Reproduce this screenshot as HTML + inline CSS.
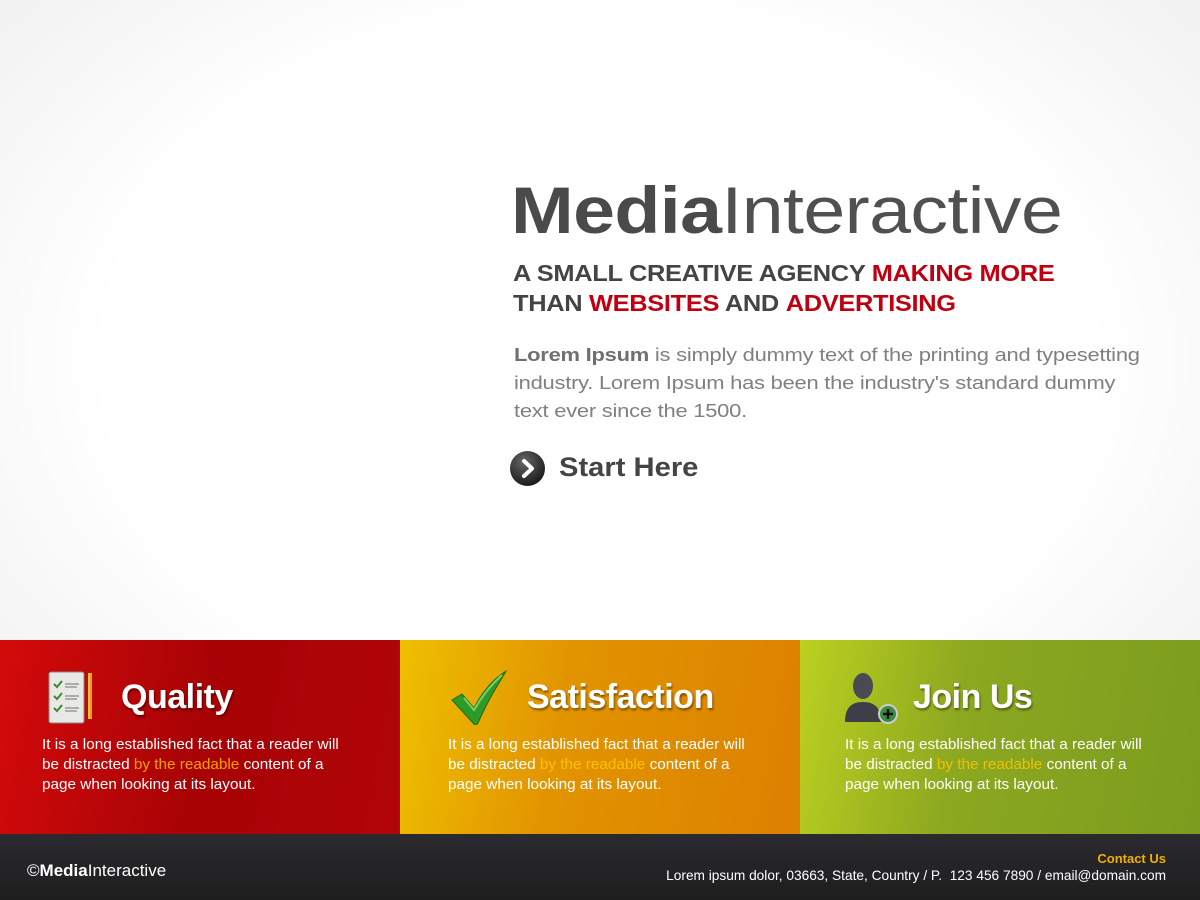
<!DOCTYPE html>
<html><head><meta charset="utf-8"><style>
*{margin:0;padding:0;box-sizing:border-box}
body{width:1200px;height:900px;overflow:hidden;font-family:"Liberation Sans",sans-serif;background:radial-gradient(ellipse 75% 70% at 50% 40%,#fff 55%,#ececec 100%);position:relative}
.abs{position:absolute;white-space:nowrap;transform-origin:0 0}
.logo{left:511px;top:170px;font-size:66px;color:#505050;letter-spacing:-0.5px;line-height:80px;transform:scaleX(1.14)}
.logo b{font-weight:bold;color:#4a4a4a}
.tag{left:513px;top:258px;font-size:23px;font-weight:bold;color:#444;line-height:30px;letter-spacing:-0.3px;transform:scaleX(1.105)}
.tag b{color:#c00010}
.p{left:514px;top:341px;font-size:18.5px;color:#808080;line-height:28px;letter-spacing:-0.2px;transform:scaleX(1.185)}
.p b{color:#707070}
.start{left:559px;top:452px;font-size:27px;font-weight:bold;color:#444;transform:scaleX(1.08)}
.panel{position:absolute;top:640px;height:194px;width:400px}
.p1{left:0;background:linear-gradient(100deg,#d40a0a 0%,#a80306 50%,#b00408 100%)}
.p2{left:400px;background:linear-gradient(100deg,#eec000 0%,#e29400 40%,#dc8000 100%)}
.p3{left:800px;background:linear-gradient(100deg,#bcd020 0%,#8ca820 40%,#7b9c1e 100%)}
.title{position:absolute;top:38px;font-size:34px;font-weight:bold;color:#fff;text-shadow:1px 2px 2px rgba(0,0,0,.45);letter-spacing:-0.5px;transform:scaleX(1.0);transform-origin:0 0;white-space:nowrap}
.txt{position:absolute;top:95px;font-size:14.3px;line-height:20px;color:#fff;white-space:nowrap;transform:scaleX(1.07);transform-origin:0 0}
.txt span{color:#f5a000}
.p2 .txt span{color:#ffc000}
.p3 .txt span{color:#f0c000}
.foot{position:absolute;left:0;top:834px;width:1200px;height:66px;background:linear-gradient(#2a2a30,#1e1e1e)}
</style></head><body>
<div class="abs logo"><b>Media</b>Interactive</div>
<div class="abs tag">A SMALL CREATIVE AGENCY <b>MAKING MORE</b><br>THAN <b>WEBSITES</b> AND <b>ADVERTISING</b></div>
<div class="abs p"><b>Lorem Ipsum</b> is simply dummy text of the printing and typesetting<br>industry. Lorem Ipsum has been the industry's standard dummy<br>text ever since the 1500.</div>
<svg class="abs" style="left:509px;top:450px" width="37" height="37" viewBox="0 0 37 37"><defs><radialGradient id="g" cx=".4" cy=".3" r=".8"><stop offset="0" stop-color="#666"/><stop offset="1" stop-color="#111"/></radialGradient></defs><circle cx="18.5" cy="18.5" r="17.5" fill="url(#g)"/><path d="M15 11l8 7.5-8 7.5" stroke="#fff" stroke-width="4" fill="none" stroke-linecap="round" stroke-linejoin="round"/></svg>
<div class="abs start">Start Here</div>

<div class="panel p1">
<svg style="position:absolute;left:48px;top:30px" width="48" height="56" viewBox="0 0 48 56"><rect x="1" y="2" width="35" height="51" rx="2" fill="#e8e8e4" stroke="#888"/><g stroke="#3a8a30" stroke-width="2" fill="none"><path d="M6 14l3 3 5-6M6 26l3 3 5-6M6 38l3 3 5-6"/></g><g stroke="#999" stroke-width="1.5"><path d="M17 14h14M17 17h12M17 26h14M17 29h12M17 38h14M17 41h12"/></g><rect x="40" y="3" width="4" height="46" fill="#e8a020"/><rect x="40" y="3" width="2" height="46" fill="#f6c040"/></svg>
<div class="title" style="left:121px">Quality</div>
<div class="txt" style="left:42px">It is a long established fact that a reader will<br>be distracted <span>by the readable</span> content of a<br>page when looking at its layout.</div>
</div>
<div class="panel p2">
<svg style="position:absolute;left:50px;top:30px" width="60" height="56" viewBox="0 0 60 56"><path d="M2 30l10-6 12 14C32 22 42 10 56 1c-4 8-16 24-28 52-1 2-4 2-5 0z" fill="#2e9a28" stroke="#1a6a18"/><path d="M14 28l10 12C32 26 42 14 52 5" stroke="#7cd060" stroke-width="2" fill="none"/></svg>
<div class="title" style="left:127px">Satisfaction</div>
<div class="txt" style="left:48px">It is a long established fact that a reader will<br>be distracted <span>by the readable</span> content of a<br>page when looking at its layout.</div>
</div>
<div class="panel p3">
<svg style="position:absolute;left:45px;top:32px" width="56" height="54" viewBox="0 0 56 54"><ellipse cx="18" cy="14" rx="10" ry="13" fill="#4a4a55"/><path d="M0 50c0-14 6-20 18-20s18 6 18 20z" fill="#3e3e48"/><circle cx="43" cy="42" r="9" fill="#3a8a40" stroke="#ccc" stroke-width="2"/><path d="M43 37v10M38 42h10" stroke="#111" stroke-width="2.5"/></svg>
<div class="title" style="left:113px">Join Us</div>
<div class="txt" style="left:45px">It is a long established fact that a reader will<br>be distracted <span>by the readable</span> content of a<br>page when looking at its layout.</div>
</div>
<div class="foot">
<div class="abs" style="left:27px;top:27px;font-size:17px;color:#fff">©<b>Media</b>Interactive</div>
<div class="abs" style="right:34px;top:17px;font-size:13px;font-weight:bold;color:#f0b000">Contact Us</div>
<div class="abs" style="right:34px;top:34px;font-size:13.7px;color:#fff">Lorem ipsum dolor, 03663, State, Country / P.&nbsp; 123 456 7890 / email@domain.com</div>
</div>
</body></html>
